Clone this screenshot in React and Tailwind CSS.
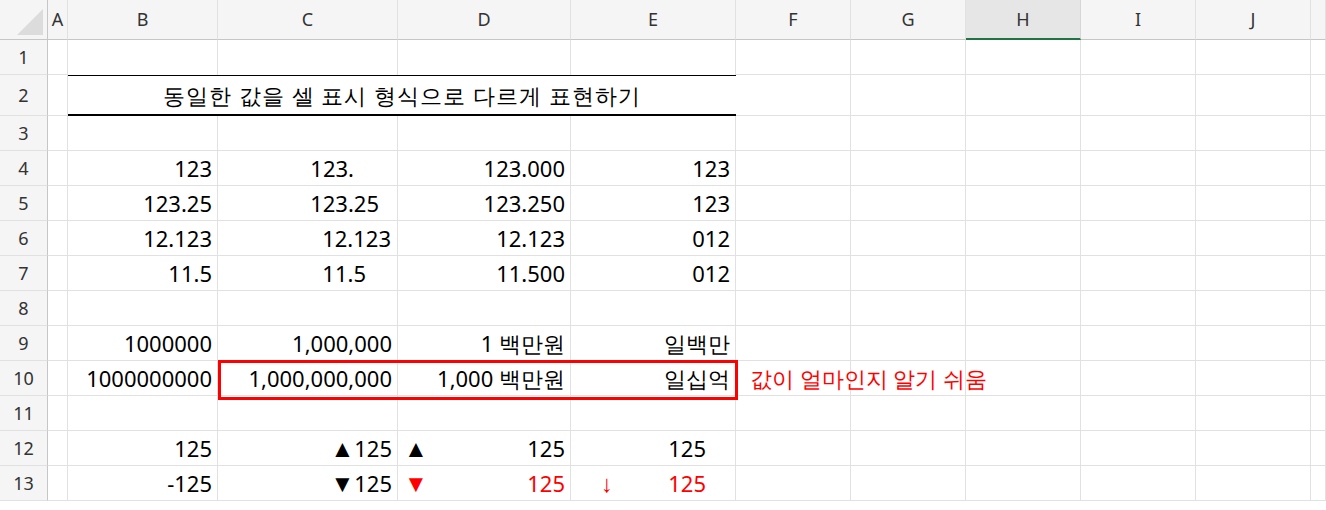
const cols = ['A', 'B', 'C', 'D', 'E', 'F', 'G', 'H', 'I', 'J', ''];
const widths = 'grid-cols-[48px_20px_150px_180px_173px_165px_115px_115px_115px_115px_115px_1fr]';

const R = ({ children, pr = 'pr-[5px]', red }) => (
  <div className={`flex h-full items-center justify-end whitespace-nowrap ${pr} ${red ? 'text-[#ff0000]' : ''}`}>{children}</div>
);

const Tri = ({ children }) => <span className="text-[24px] leading-none">{children}</span>;

const rows = {
  4: { B: <R>123</R>, C: <R pr="pr-[43px]">123.</R>, D: <R>123.000</R>, E: <R>123</R> },
  5: { B: <R>123.25</R>, C: <R pr="pr-[18px]">123.25</R>, D: <R>123.250</R>, E: <R>123</R> },
  6: { B: <R>12.123</R>, C: <R pr="pr-[6px]">12.123</R>, D: <R>12.123</R>, E: <R>012</R> },
  7: { B: <R>11.5</R>, C: <R pr="pr-[31px]">11.5</R>, D: <R>11.500</R>, E: <R>012</R> },
  9: { B: <R>1000000</R>, C: <R>1,000,000</R>, D: <R>1 백만원</R>, E: <R>일백만</R> },
  10: {
    B: <R>1000000000</R>,
    C: <R>1,000,000,000</R>,
    D: <R>1,000&nbsp;백만원</R>,
    E: <R>일십억</R>,
    F: (
      <div className="flex h-full items-center whitespace-nowrap pl-[14px] text-[#ff0000]">값이 얼마인지 알기 쉬움</div>
    ),
  },
  12: {
    B: <R>125</R>,
    C: <R><Tri>▲</Tri>125</R>,
    D: (
      <div className="flex h-full items-center justify-between pl-[6px] pr-[5px]">
        <Tri>▲</Tri>
        <span>125</span>
      </div>
    ),
    E: <R pr="pr-[29px]">125</R>,
  },
  13: {
    B: <R>-125</R>,
    C: <R><Tri>▼</Tri>125</R>,
    D: (
      <div className="flex h-full items-center justify-between pl-[6px] pr-[5px] text-[#ff0000]">
        <Tri>▼</Tri>
        <span>125</span>
      </div>
    ),
    E: (
      <div className="flex h-full items-center justify-between pl-[30px] pr-[29px] text-[#ff0000]">
        <Tri>↓</Tri>
        <span>125</span>
      </div>
    ),
  },
};

export default function App() {
  const rowNums = Array.from({ length: 13 }, (_, i) => i + 1);
  return (
    <div className="relative h-[510px] w-[1326px] overflow-hidden bg-white text-[22px] text-black [font-family:'Noto_Sans_CJK_KR','Liberation_Sans',sans-serif]">
      <div className={`grid ${widths} grid-rows-[40px_35px_41px_35px_35px_35px_35px_35px_35px_35px_35px_35px_35px_35px]`}>
        {/* header row */}
        <div className="relative border-b border-r border-[#c6c6c6] bg-[#f5f5f5]">
          <div className="absolute bottom-[4px] right-[4px] h-0 w-0 border-b-[26px] border-l-[26px] border-b-[#dcdcdc] border-l-transparent" />
        </div>
        {cols.map((c, i) => (
          <div
            key={i}
            className={`flex items-center justify-center text-[18px] text-[#333] ${
              c === 'H' ? 'border-b-2 border-r border-b-[#217346] border-r-[#d6d6d6] bg-[#e6e6e6]' : 'border-b border-r border-b-[#c6c6c6] border-r-[#e1e1e1] bg-[#f5f5f5]'
            }`}
          >
            {c}
          </div>
        ))}
        {rowNums.map((n) => (
          <Row key={n} n={n} />
        ))}
      </div>
      {/* selection box */}
      <div className="absolute left-[218px] top-[360px] h-[40px] w-[520px] border-[3px] border-[#ff0000]" />
    </div>
  );
}

function Row({ n }) {
  const data = rows[n] || {};
  const head = (
    <div className="flex items-center justify-center border-b border-r border-b-[#e1e1e1] border-r-[#c6c6c6] bg-[#f5f5f5] text-[18px] text-[#333]">
      {n}
    </div>
  );
  if (n === 2) {
    return (
      <>
        {head}
        <div className="border-b border-r border-[#e1e1e1]" />
        <div className="col-span-4 flex items-center justify-center border-b-2 border-t border-black tracking-[1px]">
          동일한 값을 셀 표시 형식으로 다르게 표현하기
        </div>
        {['F', 'G', 'H', 'I', 'J', ''].map((c) => (
          <div key={c} className="border-b border-r border-[#e1e1e1]" />
        ))}
      </>
    );
  }
  return (
    <>
      {head}
      {cols.map((c, i) => (
        <div
          key={i}
          className={`overflow-visible border-b border-r border-[#e1e1e1] ${n === 1 && 'BCDE'.includes(c) && c ? 'border-b-0' : ''}`}
        >
          {data[c] || null}
        </div>
      ))}
    </>
  );
}
